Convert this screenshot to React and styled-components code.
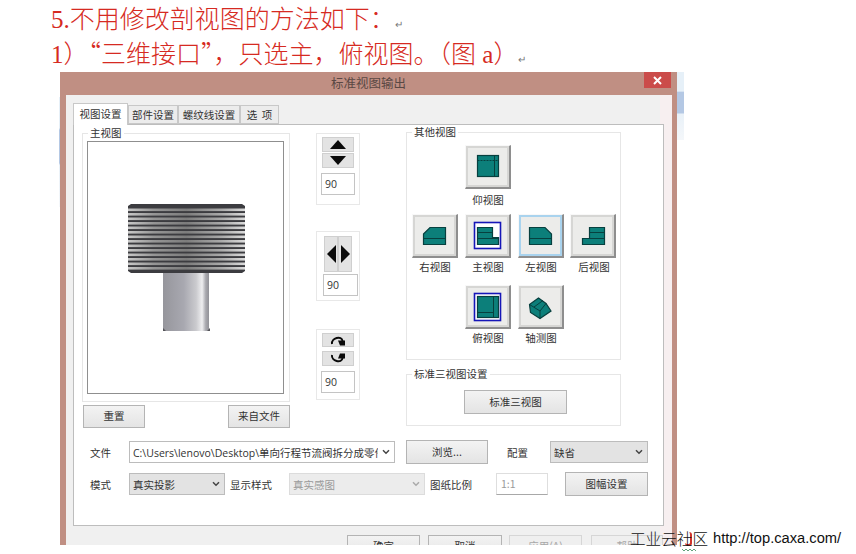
import React from "react"
import styled, { createGlobalStyle } from "styled-components"

const ui = `"Noto Sans CJK SC", "Liberation Sans", sans-serif`

const GlobalStyle = createGlobalStyle`
  html, body {
    margin: 0;
    padding: 0;
    background: #fff;
  }
`

const Page = styled.div`
  position: relative;
  width: 856px;
  height: 554px;
  overflow: hidden;
  background: #fff;
`

const DocText = styled.div`
  padding: 4px 0 0 51px;
  height: 68px;
  box-sizing: border-box;
  font-family: "Liberation Serif", "Noto Sans CJK SC", serif;
  font-size: 25px;
  font-weight: 300;
  color: #d62a22;
  white-space: nowrap;
`

const DocLine = styled.div`
  height: 32px;
  line-height: 32px;
  overflow: visible;
`

const CjkMark = styled.span`
  font-family: "Noto Sans CJK SC", sans-serif;
`

const Para = styled.span`
  display: inline-block;
  font-family: "Liberation Sans", sans-serif;
  font-size: 10px;
  line-height: 10px;
  color: #777;
`

const Window = styled.div`
  display: flex;
  align-items: flex-start;
  margin: 4px 0 0 59px;
`

const EdgeStrip = styled.div`
  width: ${p => p.$width}px;
  height: ${p => p.$height}px;
  margin-top: ${p => p.$top || 0}px;
  background: linear-gradient(180deg, #e6f0f8 0%, #e6f0f8 28%, #b4c8e4 30%, #b4c8e4 60%, #e9f1f8 62%, #f4f7fa 100%);
`

const Dialog = styled.div`
  width: 617px;
  height: 473px;
  overflow: hidden;
  display: flex;
  flex-direction: column;
  background: #c08f83;
  font-family: ${ui};
  font-size: 10.5px;
  color: #333;
`

const TitleBar = styled.div`
  position: relative;
  height: 23px;
  flex: none;
  text-align: center;
  font-size: 12.5px;
  line-height: 22px;
  color: #5a4844;
`

const CloseButton = styled.div`
  position: absolute;
  top: 0;
  right: 6px;
  width: 27px;
  height: 16px;
  background: #cb4c4a;
  display: flex;
  align-items: center;
  justify-content: center;
`

const Body = styled.div`
  margin: 0 5px 0 6px;
  padding: 8px 8px 0 7px;
  height: 470px;
  box-sizing: border-box;
  background: linear-gradient(90deg, #f0f0f0 0%, #f0f0f0 98%, #f7eff0 98%);
`

const TabStrip = styled.div`
  display: flex;
  height: 21px;
  align-items: flex-end;
  position: relative;
  z-index: 1;
`

const Tab = styled.div`
  box-sizing: border-box;
  width: ${p => p.$width}px;
  height: ${p => (p.$active ? 22 : 19)}px;
  margin-bottom: ${p => (p.$active ? -1 : 0)}px;
  text-align: center;
  line-height: ${p => (p.$active ? 20 : 18)}px;
  white-space: pre;
  background: ${p => (p.$active ? "#fff" : "#ececec")};
  border: 1px solid #c8c8c8;
  border-bottom: ${p => (p.$active ? "none" : "1px solid #c8c8c8")};
`

const Panel = styled.div`
  box-sizing: border-box;
  width: 591px;
  height: 402px;
  padding: 8px 0 0 8px;
  background: #fff;
  border: 1px solid #bdbdbd;
`

const Columns = styled.div`
  display: flex;
  align-items: flex-start;
`

const LeftColumn = styled.div`
  width: 208px;
  flex: none;
`

const SpinColumn = styled.div`
  width: 44px;
  margin-left: 26px;
  flex: none;
`

const RightColumn = styled.div`
  width: 215px;
  margin: -1px 0 0 46px;
  flex: none;
`

const Group = styled.div`
  position: relative;
  box-sizing: border-box;
  height: ${p => p.$height}px;
  border: 1px solid #e6e6e6;
`

const Legend = styled.span`
  position: absolute;
  top: -8px;
  left: 5px;
  padding: 0 2px;
  background: #fff;
  line-height: 13px;
`

const Canvas = styled.div`
  box-sizing: border-box;
  width: 197px;
  height: 253px;
  margin: 7px 0 0 4px;
  border: 1px solid #8f8f8f;
  background: #fff;
`

const ButtonRow = styled.div`
  display: flex;
  justify-content: space-between;
  margin: 3px 0 0 1px;
`

const PushButton = styled.div`
  box-sizing: border-box;
  flex: none;
  width: ${p => p.$width}px;
  height: ${p => p.$height || 23}px;
  margin-left: ${p => p.$left || 0}px;
  text-align: center;
  line-height: ${p => (p.$height || 23) - 3}px;
  color: ${p => (p.$disabled ? "#a8a8a8" : "#333")};
  background: ${p => (p.$disabled ? "#efefef" : "linear-gradient(180deg, #f3f3f3, #e4e4e4)")};
  border: 1px solid ${p => (p.$disabled ? "#d6d6d6" : "#b4b4b4")};
`

const SpinGroup = styled.div`
  box-sizing: border-box;
  height: ${p => p.$height}px;
  margin-top: ${p => p.$top || 0}px;
  padding: 3px 0 0 4px;
  border: 1px solid #e8e8e8;
`

const SpinButton = styled.div`
  box-sizing: border-box;
  width: ${p => p.$width || 32}px;
  height: ${p => p.$height || 15}px;
  margin: ${p => p.$margin || "0 0 1px 1px"};
  background: #e3e3e3;
  border: 1px solid #cfcfcf;
  display: flex;
  align-items: center;
  justify-content: center;
`

const SplitSpin = styled.div`
  display: flex;
  margin: 1px 0 2px 3px;
`

const SpinInput = styled.div`
  box-sizing: border-box;
  width: ${p => p.$width || 34}px;
  height: 22px;
  margin: ${p => p.$margin || "5px 0 0 0"};
  padding-left: 3px;
  border: 1px solid #c4c4c4;
  background: #fff;
  font-family: "Open Sans", "Liberation Sans", sans-serif;
  font-size: 10.5px;
  line-height: 20px;
`

const ViewGrid = styled.div`
  display: grid;
  grid-template-columns: repeat(4, 46px);
  grid-template-rows: 69px 71px 60px;
  column-gap: 7px;
  padding: 12px 0 0 5px;
`

const ViewCell = styled.div`
  grid-column: ${p => p.$col};
  grid-row: ${p => p.$row};
  text-align: center;
`

const ViewButton = styled.div`
  box-sizing: border-box;
  width: 46px;
  height: 44px;
  background: #ececea;
  border-top: 1px solid #f8f8f8;
  border-left: 1px solid #f8f8f8;
  border-right: 2px solid #8e8e8e;
  border-bottom: 2px solid #8e8e8e;
  box-shadow: inset 0 0 0 2px ${p => (p.$hover ? "#a9d3ee" : "#d6d6d4")};
  margin-left: ${p => (p.$col === 4 ? -1 : 0)}px;

  svg {
    display: block;
    margin: -1px 0 0 -1px;
  }
`

const ViewLabel = styled.div`
  margin-top: ${p => p.$gap}px;
  line-height: 12px;
`

const StandardGroup = styled(Group)`
  margin-top: 14px;
  padding: 15px 0 0 57px;
`

const Form = styled.div`
  margin-top: 12px;
  padding-left: 8px;
`

const FormRow = styled.div`
  display: flex;
  align-items: center;
  height: 24px;
  margin-bottom: ${p => p.$bottom || 0}px;
`

const FieldLabel = styled.div`
  flex: none;
  width: ${p => p.$width}px;
  margin-left: ${p => p.$left || 0}px;
  white-space: nowrap;
`

const Select = styled.div`
  box-sizing: border-box;
  flex: none;
  width: ${p => p.$width}px;
  height: 22px;
  padding-left: 3px;
  display: flex;
  align-items: center;
  justify-content: space-between;
  overflow: hidden;
  white-space: nowrap;
  color: ${p => (p.$disabled ? "#9a9a9a" : "#333")};
  background: ${p => (p.$plain ? "#fff" : p.$disabled ? "#ececec" : "#e3e3e3")};
  border: 1px solid ${p => (p.$disabled ? "#dcdcdc" : "#bcbcbc")};
`

const SelectText = styled.span`
  overflow: hidden;
  flex: 1;
`

const PathText = styled(SelectText)`
  font-family: "Open Sans", "Noto Sans CJK SC", sans-serif;
`

const Chevron = styled.svg`
  flex: none;
  margin: 0 4px 0 4px;
`

const RatioInput = styled.div`
  box-sizing: border-box;
  flex: none;
  width: 52px;
  height: 22px;
  padding-left: 4px;
  line-height: 19px;
  color: #9a9a9a;
  background: #fff;
  border: 1px solid #dedede;
  border-bottom-color: #a8a8a8;
`

const Footer = styled.div`
  display: flex;
  margin: 9px 0 0 274px;
`

const Watermark = styled.div`
  position: absolute;
  left: 630px;
  top: 528px;
  display: flex;
  align-items: center;
  height: 20px;
  color: #111;
  white-space: nowrap;
`

const WatermarkName = styled.span`
  font-family: "Noto Sans CJK SC", sans-serif;
  font-size: 15.6px;
  font-weight: 300;
`

const WatermarkUrl = styled.span`
  margin-left: 5px;
  font-family: "Liberation Sans", sans-serif;
  font-size: 14.7px;
`

const RedMark = styled.span`
  position: absolute;
  left: 685px;
  top: 532px;
  width: 7px;
  height: 14px;
  border-right: 2px solid #d0342c;
  border-bottom: 2px solid #d0342c;
  border-radius: 0 3px 3px 3px;
  box-sizing: border-box;
`

const Squiggle = styled.svg`
  position: absolute;
  left: 682px;
  top: 548px;
`

const teal = { fill: "#0c7f7a", stroke: "#07403f", strokeWidth: 1.2 }

const IconFrame = ({ children }) => (
  <svg width="46" height="44" viewBox="0 0 46 44">{children}</svg>
)

const BlueFrame = ({ y, h }) => (
  <rect x="9.5" y={y} width="26" height={h} fill="#fff" stroke="#1616b8" strokeWidth="1.6" />
)

const icons = {
  bottom: (
    <IconFrame>
      <rect x="12.5" y="10.5" width="21" height="21" {...teal} />
      <path d="M12.5 15.5H33.5" stroke="#07403f" strokeDasharray="2 1" fill="none" />
      <path d="M29.5 10.5V31.5" stroke="#07403f" fill="none" />
    </IconFrame>
  ),
  right: (
    <IconFrame>
      <path d="M11.5 20 L18 13.5 H33.5 V30.5 H11.5 Z" {...teal} />
      <path d="M11.5 24.5H33.5" stroke="#07403f" fill="none" />
    </IconFrame>
  ),
  front: (
    <IconFrame>
      <BlueFrame y="8.5" h="26" />
      <path d="M12.5 13.5 H27.5 V23.5 H33.5 V30.5 H12.5 Z" {...teal} />
      <path d="M12.5 18.5H27.5M12.5 24.5H33.5" stroke="#07403f" fill="none" />
    </IconFrame>
  ),
  left: (
    <IconFrame>
      <path d="M11.5 13.5 H27 L33.5 20 V30.5 H11.5 Z" {...teal} />
      <path d="M11.5 24.5H33.5" stroke="#07403f" fill="none" />
    </IconFrame>
  ),
  back: (
    <IconFrame>
      <path d="M12.5 30.5 V24.5 H19.5 V13.5 H34.5 V30.5 Z" {...teal} />
      <path d="M19.5 18.5H34.5M12.5 24.5H34.5" stroke="#07403f" fill="none" />
    </IconFrame>
  ),
  top: (
    <IconFrame>
      <BlueFrame y="8.5" h="27" />
      <rect x="12.5" y="11.5" width="21" height="21" {...teal} />
      <path d="M28.5 11.5V32.5M12.5 27.5H28.5" stroke="#07403f" fill="none" />
    </IconFrame>
  ),
  iso: (
    <IconFrame>
      <path d="M11.5 19.5 L20.5 13 L28 18.5 L33 26 L22 33.5 L12.5 27.5 Z" {...teal} />
      <path d="M11.5 19.5 L22 26 V33.5 M22 26 L28 18.5 M16 22 L25 15.5" stroke="#07403f" fill="none" />
    </IconFrame>
  ),
}

const Triangle = ({ dir }) => {
  const d = { up: "M1 10 L9 1 L17 10 Z", down: "M1 1 L17 1 L9 10 Z" }[dir]
  return (
    <svg width="18" height="11" viewBox="0 0 18 11"><path d={d} fill="#0a0a0a" /></svg>
  )
}

const SideTriangle = ({ dir }) => {
  const d = dir === "left" ? "M10 1 V19 L1 10 Z" : "M1 1 V19 L10 10 Z"
  return (
    <svg width="11" height="20" viewBox="0 0 11 20"><path d={d} fill="#0a0a0a" /></svg>
  )
}

const RotateArrow = ({ flip }) => (
  <svg width="16" height="11" viewBox="0 0 16 11">
    <g transform={flip ? "matrix(1 0 0 -1 0 11)" : undefined}>
      <path d="M2 9 C1 3 12 0 12.5 6" fill="none" stroke="#0a0a0a" strokeWidth="2" />
      <path d="M8 5.5 H15 V10.5 H10 Z" fill="#0a0a0a" />
    </g>
  </svg>
)

const ChevronDown = ({ color = "#444" }) => (
  <Chevron width="8" height="6" viewBox="0 0 8 6">
    <path d="M1 1.2 L4 4.2 L7 1.2" fill="none" stroke={color} strokeWidth="1.5" />
  </Chevron>
)

const PartDrawing = () => (
  <svg width="195" height="251" viewBox="0 0 195 251">
    <defs>
      <linearGradient id="rib" x1="0" x2="1" y1="0" y2="0">
        <stop offset="0" stopColor="#c8c8c8" />
        <stop offset="0.22" stopColor="#969696" />
        <stop offset="0.5" stopColor="#7c7c7c" />
        <stop offset="0.8" stopColor="#aaaaaa" />
        <stop offset="1" stopColor="#dcdcdc" />
      </linearGradient>
      <linearGradient id="shank" x1="0" x2="1" y1="0" y2="0">
        <stop offset="0" stopColor="#96969c" />
        <stop offset="0.45" stopColor="#a8a8b0" />
        <stop offset="0.72" stopColor="#cacace" />
        <stop offset="0.85" stopColor="#eeeef0" />
        <stop offset="0.93" stopColor="#a8a8ae" />
        <stop offset="1" stopColor="#929298" />
      </linearGradient>
    </defs>
    <rect x="75" y="130" width="46" height="59" fill="url(#shank)" />
    <path d="M75 186 L78 189 H119 L122 186 V189 H75 Z" fill="#55555a" />
    <path d="M40 64 L43 62 H154 L157 64 V129 L154 131 H43 L40 129 Z" fill="#3c3c40" />
    {Array.from({ length: 14 }, (_, i) => (
      <rect key={i} x="40" y={66.5 + i * 4.5} width="117" height="2.6" fill="url(#rib)" />
    ))}
  </svg>
)

const Spinner90 = ({ width, margin }) => <SpinInput $width={width} $margin={margin}>90</SpinInput>

const OtherViews = [
  { label: "仰视图", icon: "bottom", col: 2, row: 1, gap: 5 },
  { label: "右视图", icon: "right", col: 1, row: 2, gap: 3 },
  { label: "主视图", icon: "front", col: 2, row: 2, gap: 3 },
  { label: "左视图", icon: "left", col: 3, row: 2, gap: 3, hover: true },
  { label: "后视图", icon: "back", col: 4, row: 2, gap: 3 },
  { label: "俯视图", icon: "top", col: 2, row: 3, gap: 3 },
  { label: "轴测图", icon: "iso", col: 3, row: 3, gap: 3 },
]

const App = () => {
  return (
    <Page>
      <GlobalStyle />
      <DocText>
        <DocLine>5.不用修改剖视图的方法如下：<Para>↵</Para></DocLine>
        <DocLine>1）<CjkMark>“</CjkMark>三维接口<CjkMark>”</CjkMark>，只选主，俯视图。（图 a）<Para>↵</Para></DocLine>
      </DocText>

      <Window>
        <EdgeStrip $width={1} $height={110} $top={25} />
        <Dialog>
          <TitleBar>
            标准视图输出
            <CloseButton>
              <svg width="9" height="9" viewBox="0 0 9 9">
                <path d="M1 1 L8 8 M8 1 L1 8" stroke="#fff" strokeWidth="2" />
              </svg>
            </CloseButton>
          </TitleBar>

          <Body>
            <TabStrip>
              <Tab $width={55} $active>视图设置</Tab>
              <Tab $width={50}>部件设置</Tab>
              <Tab $width={62}>螺纹线设置</Tab>
              <Tab $width={39}>选  项</Tab>
            </TabStrip>

            <Panel>
              <Columns>
                <LeftColumn>
                  <Group $height={269}>
                    <Legend>主视图</Legend>
                    <Canvas><PartDrawing /></Canvas>
                  </Group>
                  <ButtonRow>
                    <PushButton $width={62}>重置</PushButton>
                    <PushButton $width={62}>来自文件</PushButton>
                  </ButtonRow>
                </LeftColumn>

                <SpinColumn>
                  <SpinGroup $height={72}>
                    <SpinButton><Triangle dir="up" /></SpinButton>
                    <SpinButton><Triangle dir="down" /></SpinButton>
                    <Spinner90 />
                  </SpinGroup>
                  <SpinGroup $height={70} $top={26}>
                    <SplitSpin>
                      <SpinButton $width={14} $height={36} $margin="0"><SideTriangle dir="left" /></SpinButton>
                      <SpinButton $width={14} $height={36} $margin="0"><SideTriangle dir="right" /></SpinButton>
                    </SplitSpin>
                    <Spinner90 width={35} margin="0 0 0 2px" />
                  </SpinGroup>
                  <SpinGroup $height={71} $top={28}>
                    <SpinButton $height={14} $margin="0 0 4px 1px"><RotateArrow /></SpinButton>
                    <SpinButton><RotateArrow flip /></SpinButton>
                    <Spinner90 />
                  </SpinGroup>
                </SpinColumn>

                <RightColumn>
                  <Group $height={228}>
                    <Legend>其他视图</Legend>
                    <ViewGrid>
                      {OtherViews.map(v => (
                        <ViewCell key={v.icon} $col={v.col} $row={v.row}>
                          <ViewButton $hover={v.hover} $col={v.col}>{icons[v.icon]}</ViewButton>
                          <ViewLabel $gap={v.gap}>{v.label}</ViewLabel>
                        </ViewCell>
                      ))}
                    </ViewGrid>
                  </Group>
                  <StandardGroup $height={52}>
                    <Legend>标准三视图设置</Legend>
                    <PushButton $width={103} $height={24}>标准三视图</PushButton>
                  </StandardGroup>
                </RightColumn>
              </Columns>

              <Form>
                <FormRow $bottom={8}>
                  <FieldLabel $width={39}>文件</FieldLabel>
                  <Select $width={266} $plain>
                    <PathText>C:\Users\lenovo\Desktop\单向行程节流阀拆分成零件</PathText>
                    <ChevronDown />
                  </Select>
                  <PushButton $width={82} $height={24} $left={11}>浏览...</PushButton>
                  <FieldLabel $width={43} $left={19}>配置</FieldLabel>
                  <Select $width={98}>
                    <SelectText>缺省</SelectText>
                    <ChevronDown />
                  </Select>
                </FormRow>
                <FormRow>
                  <FieldLabel $width={39}>模式</FieldLabel>
                  <Select $width={96}>
                    <SelectText>真实投影</SelectText>
                    <ChevronDown />
                  </Select>
                  <FieldLabel $width={59} $left={5}>显示样式</FieldLabel>
                  <Select $width={136} $disabled>
                    <SelectText>真实感图</SelectText>
                    <ChevronDown color="#aaa" />
                  </Select>
                  <FieldLabel $width={66} $left={5}>图纸比例</FieldLabel>
                  <RatioInput>1:1</RatioInput>
                  <PushButton $width={83} $height={24} $left={17}>图幅设置</PushButton>
                </FormRow>
              </Form>
            </Panel>

            <Footer>
              <PushButton $width={73}>确定</PushButton>
              <PushButton $width={74} $left={8}>取消</PushButton>
              <PushButton $width={73} $left={7} $disabled>应用(A)</PushButton>
              <PushButton $width={72} $left={9} $disabled>帮助</PushButton>
            </Footer>
          </Body>
        </Dialog>
        <EdgeStrip $width={7} $height={68} />
      </Window>

      <RedMark />
      <Watermark>
        <WatermarkName>工业云社区</WatermarkName>
        <WatermarkUrl>http://top.caxa.com/</WatermarkUrl>
      </Watermark>
      <Squiggle width="14" height="4" viewBox="0 0 14 4">
        <path d="M0 1 L2 3 L4 1 L6 3 L8 1 L10 3 L12 1 L14 3" fill="none" stroke="#3a8a5a" strokeWidth="0.8" />
      </Squiggle>
    </Page>
  )
}

export default App
